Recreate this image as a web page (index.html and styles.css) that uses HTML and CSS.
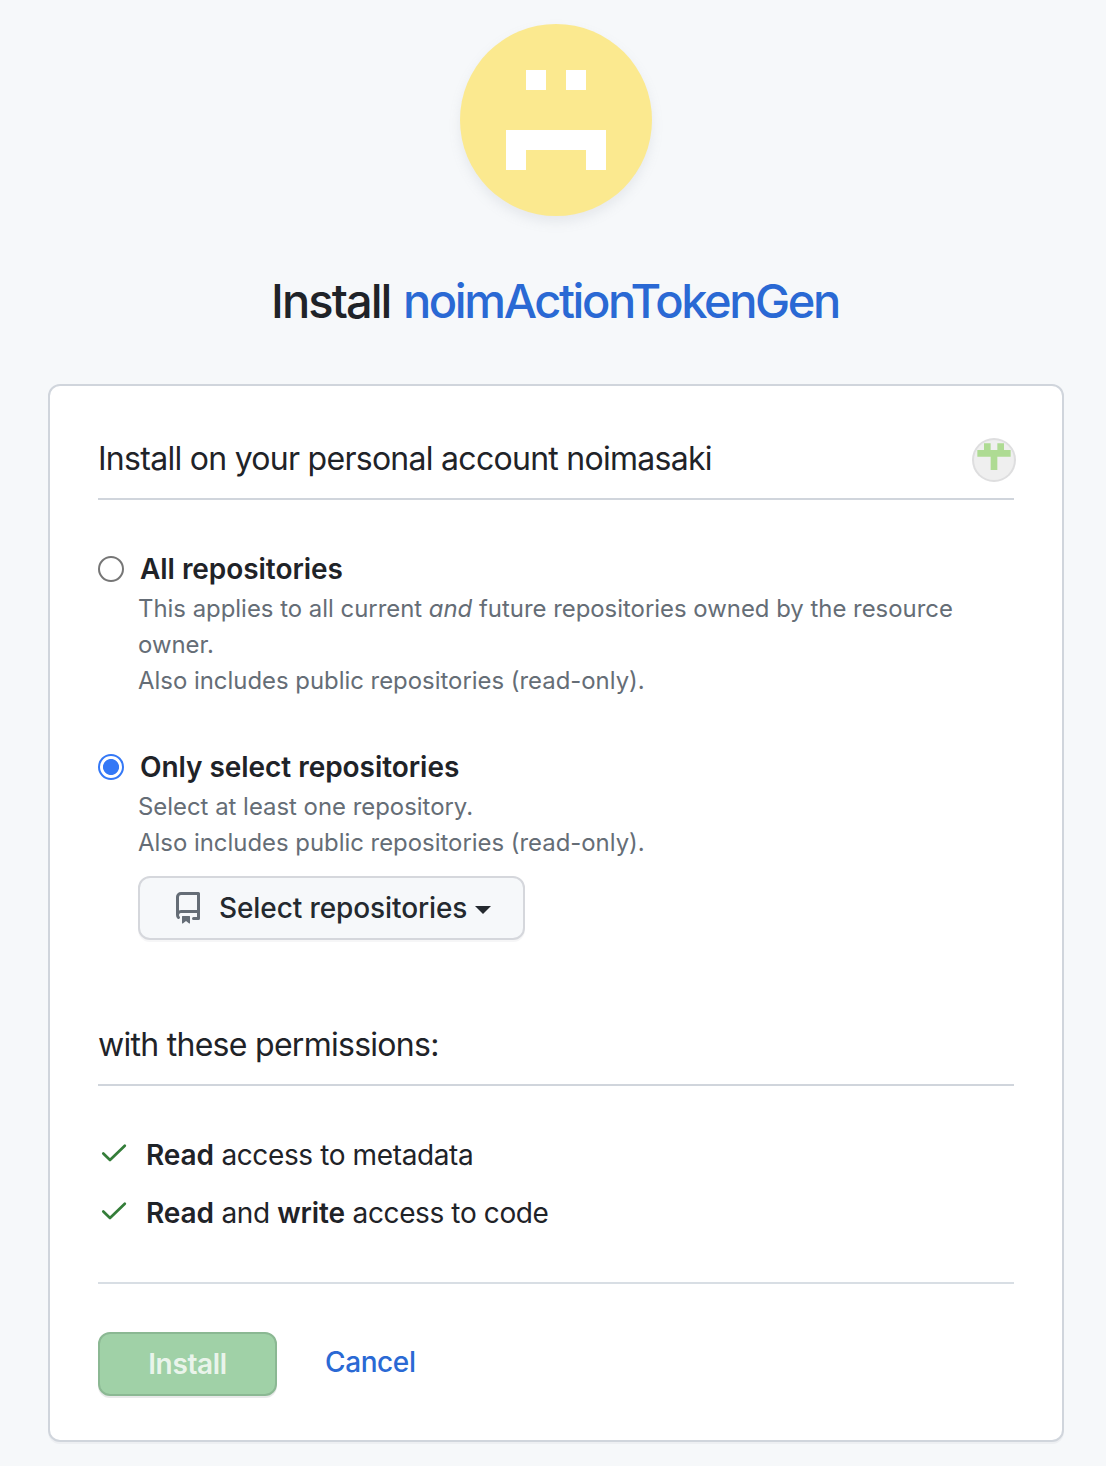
FILE: index.html
```html
<!DOCTYPE html>
<html lang="en">
<head>
<meta charset="utf-8">
<title>Install noimActionTokenGen</title>
<link rel="stylesheet" href="styles.css">
</head>
<body>
<main class="page">
  <svg class="app-logo" viewBox="0 0 192 192" aria-hidden="true">
    <path fill="#fff" d="M66 46h20v20H66zM106 46h20v20h-20zM46 106h100v40h-20v-20H66v20H46z"/>
  </svg>
  <h1 class="title"><span class="title-verb">Install</span> <a class="title-app" href="#">noimActionTokenGen</a></h1>

  <form class="card">
    <header class="section-head">
      <h2 class="section-title">Install on your personal account noimasaki</h2>
      <svg class="avatar" viewBox="0 0 420 420" aria-hidden="true">
        <path fill="#aedb93" d="M105 35h70v70h70V35h70v70h70v70H245v140h-70V175H35v-70h70z"/>
      </svg>
    </header>

    <div class="option">
      <label class="option-label"><input class="radio" type="radio" name="target"><span>All repositories</span></label>
      <p class="note">This applies to all current <em>and</em> future repositories owned by the resource owner.<br>Also includes public repositories (read-only).</p>
    </div>

    <div class="option option-select">
      <label class="option-label"><input class="radio" type="radio" name="target" checked><span>Only select repositories</span></label>
      <p class="note">Select at least one repository.<br>Also includes public repositories (read-only).</p>
      <button class="btn select-btn" type="button">
        <svg class="repo-icon" viewBox="0 0 16 16" aria-hidden="true"><path fill="currentColor" fill-rule="evenodd" d="M2 2.5A2.5 2.5 0 0 1 4.5 0h8.75a.75.75 0 0 1 .75.75v12.5a.75.75 0 0 1-.75.75h-2.5a.75.75 0 0 1 0-1.5h1.75v-2h-8a1 1 0 0 0-.714 1.7.75.75 0 0 1-1.072 1.05A2.495 2.495 0 0 1 2 11.5Zm10.5-1h-8a1 1 0 0 0-1 1v6.708A2.486 2.486 0 0 1 4.5 9h8ZM5 12.25a.25.25 0 0 1 .25-.25h3.5a.25.25 0 0 1 .25.25v3.25a.25.25 0 0 1-.4.2l-1.45-1.087a.249.249 0 0 0-.3 0L5.4 15.7a.25.25 0 0 1-.4-.2Z"/></svg>
        <span>Select repositories</span>
        <span class="caret"></span>
      </button>
    </div>

    <header class="section-head permissions-head">
      <h2 class="section-title">with these permissions:</h2>
    </header>
    <ul class="permissions">
      <li class="permission">
        <svg class="check" viewBox="0 0 16 16" aria-hidden="true"><path fill="none" stroke="currentColor" stroke-width="1.35" stroke-linecap="round" stroke-linejoin="round" d="M2.65 8.25 6 11.5 13.4 4.4"/></svg>
        <span><strong>Read</strong> access to metadata</span>
      </li>
      <li class="permission">
        <svg class="check" viewBox="0 0 16 16" aria-hidden="true"><path fill="none" stroke="currentColor" stroke-width="1.35" stroke-linecap="round" stroke-linejoin="round" d="M2.65 8.25 6 11.5 13.4 4.4"/></svg>
        <span><strong>Read</strong> and <strong>write</strong> access to code</span>
      </li>
    </ul>

    <footer class="actions">
      <button class="btn install-btn" type="button" disabled>Install</button>
      <a class="cancel" href="#">Cancel</a>
    </footer>
  </form>
</main>
</body>
</html>
```
FILE: styles.css
```css
* { box-sizing: border-box; }
body {
  margin: 0;
  background: #f6f8fa;
  color: #1f2328;
  font-family: Inter, "Liberation Sans", sans-serif;
  font-size: 28px;
  line-height: 42px;
}
a { color: #2a69d4; text-decoration: none; }
h1, h2, p, ul { margin: 0; padding: 0; font-weight: 400; }
strong { font-weight: 600; letter-spacing: -.1px; }

.page {
  height: 1466px;
  padding: 24px 42px 24px 48px;
  overflow: hidden;
}
.app-logo {
  display: block;
  width: 192px;
  height: 192px;
  margin: 0 auto;
  border-radius: 50%;
  background: #fbe98f;
  box-shadow: 0 6px 12px rgba(140, 149, 159, .15);
}
.title {
  margin: 48px 0 46px;
  padding-right: 2px;
  font-size: 47px;
  font-weight: 450;
  line-height: 74px;
  text-align: center;
  white-space: nowrap;
}
.title-verb { letter-spacing: -1.95px; }
.title-app { letter-spacing: -2.4px; }

.card {
  height: 1058px;
  padding: 48px;
  border: 2px solid #d0d5dc;
  border-radius: 12px;
  background: #fff;
  box-shadow: 0 2px 0 rgba(31, 35, 40, .04);
}
.section-head {
  display: flex;
  justify-content: space-between;
  height: 66px;
  padding-bottom: 16px;
  border-bottom: 2px solid #d0d5dc;
}
.section-title {
  font-size: 32px;
  line-height: 50px;
  letter-spacing: -.72px;
  white-space: nowrap;
}
.avatar {
  width: 40px;
  height: 40px;
  margin-top: 6px;
  border-radius: 50%;
  background: #efefef;
  box-shadow: 0 0 0 2px #dededf;
}

.option { padding-top: 48px; }
.option-select { padding-top: 47px; }
.option-label {
  display: flex;
  align-items: center;
  gap: 16px;
  height: 42px;
  font-weight: 600;
  letter-spacing: -.05px;
}
.radio {
  appearance: none;
  width: 26px;
  height: 26px;
  margin: 0;
  border: 2px solid #767676;
  border-radius: 50%;
  background: #fff;
}
.radio:checked {
  border-color: #3478f6;
  background: radial-gradient(circle, #3478f6 7.6px, #fff 8.4px);
}
.note {
  padding: 1px 0 0 40px;
  color: #656d76;
  font-size: 23.9px;
  line-height: 36px;
}
.btn {
  display: flex;
  align-items: center;
  justify-content: center;
  height: 64px;
  padding: 0;
  border: 2px solid #d5d7dc;
  border-radius: 12px;
  font: 500 28px/40px Inter, "Liberation Sans", sans-serif;
  white-space: nowrap;
}
.select-btn {
  width: 387px;
  margin: 15px 0 0 40px;
  padding-left: 32px;
  justify-content: flex-start;
  background: #f6f8fa;
  color: #24292f;
  letter-spacing: -.1px;
  box-shadow: 0 2px 0 rgba(31, 35, 40, .04);
}
.repo-icon { width: 32px; height: 32px; margin-right: 15px; color: #656d76; }
.caret {
  margin: 3px 0 0 8px;
  border: 8px solid transparent;
  border-top-color: currentColor;
  border-bottom: 0;
}

.permissions-head { margin-top: 80px; }
.permissions {
  padding: 48px 0;
  border-bottom: 2px solid #d8dee4;
  letter-spacing: -.38px;
  list-style: none;
}
.permission { display: flex; gap: 16px; height: 42px; }
.permission + .permission { margin-top: 16px; }
.check { width: 32px; height: 32px; margin-top: 3px; color: #347d39; }

.actions { display: flex; align-items: center; gap: 48px; padding-top: 48px; }
.install-btn {
  width: 179px;
  border-color: #8bb893;
  background: #a0d1a7;
  color: rgba(255, 255, 255, .8);
  font-weight: 600;
  letter-spacing: -.35px;
  box-shadow: 0 2px 0 rgba(31, 35, 40, .1);
}
.cancel { margin-top: -4px; font-weight: 550; letter-spacing: -.4px; }
```
